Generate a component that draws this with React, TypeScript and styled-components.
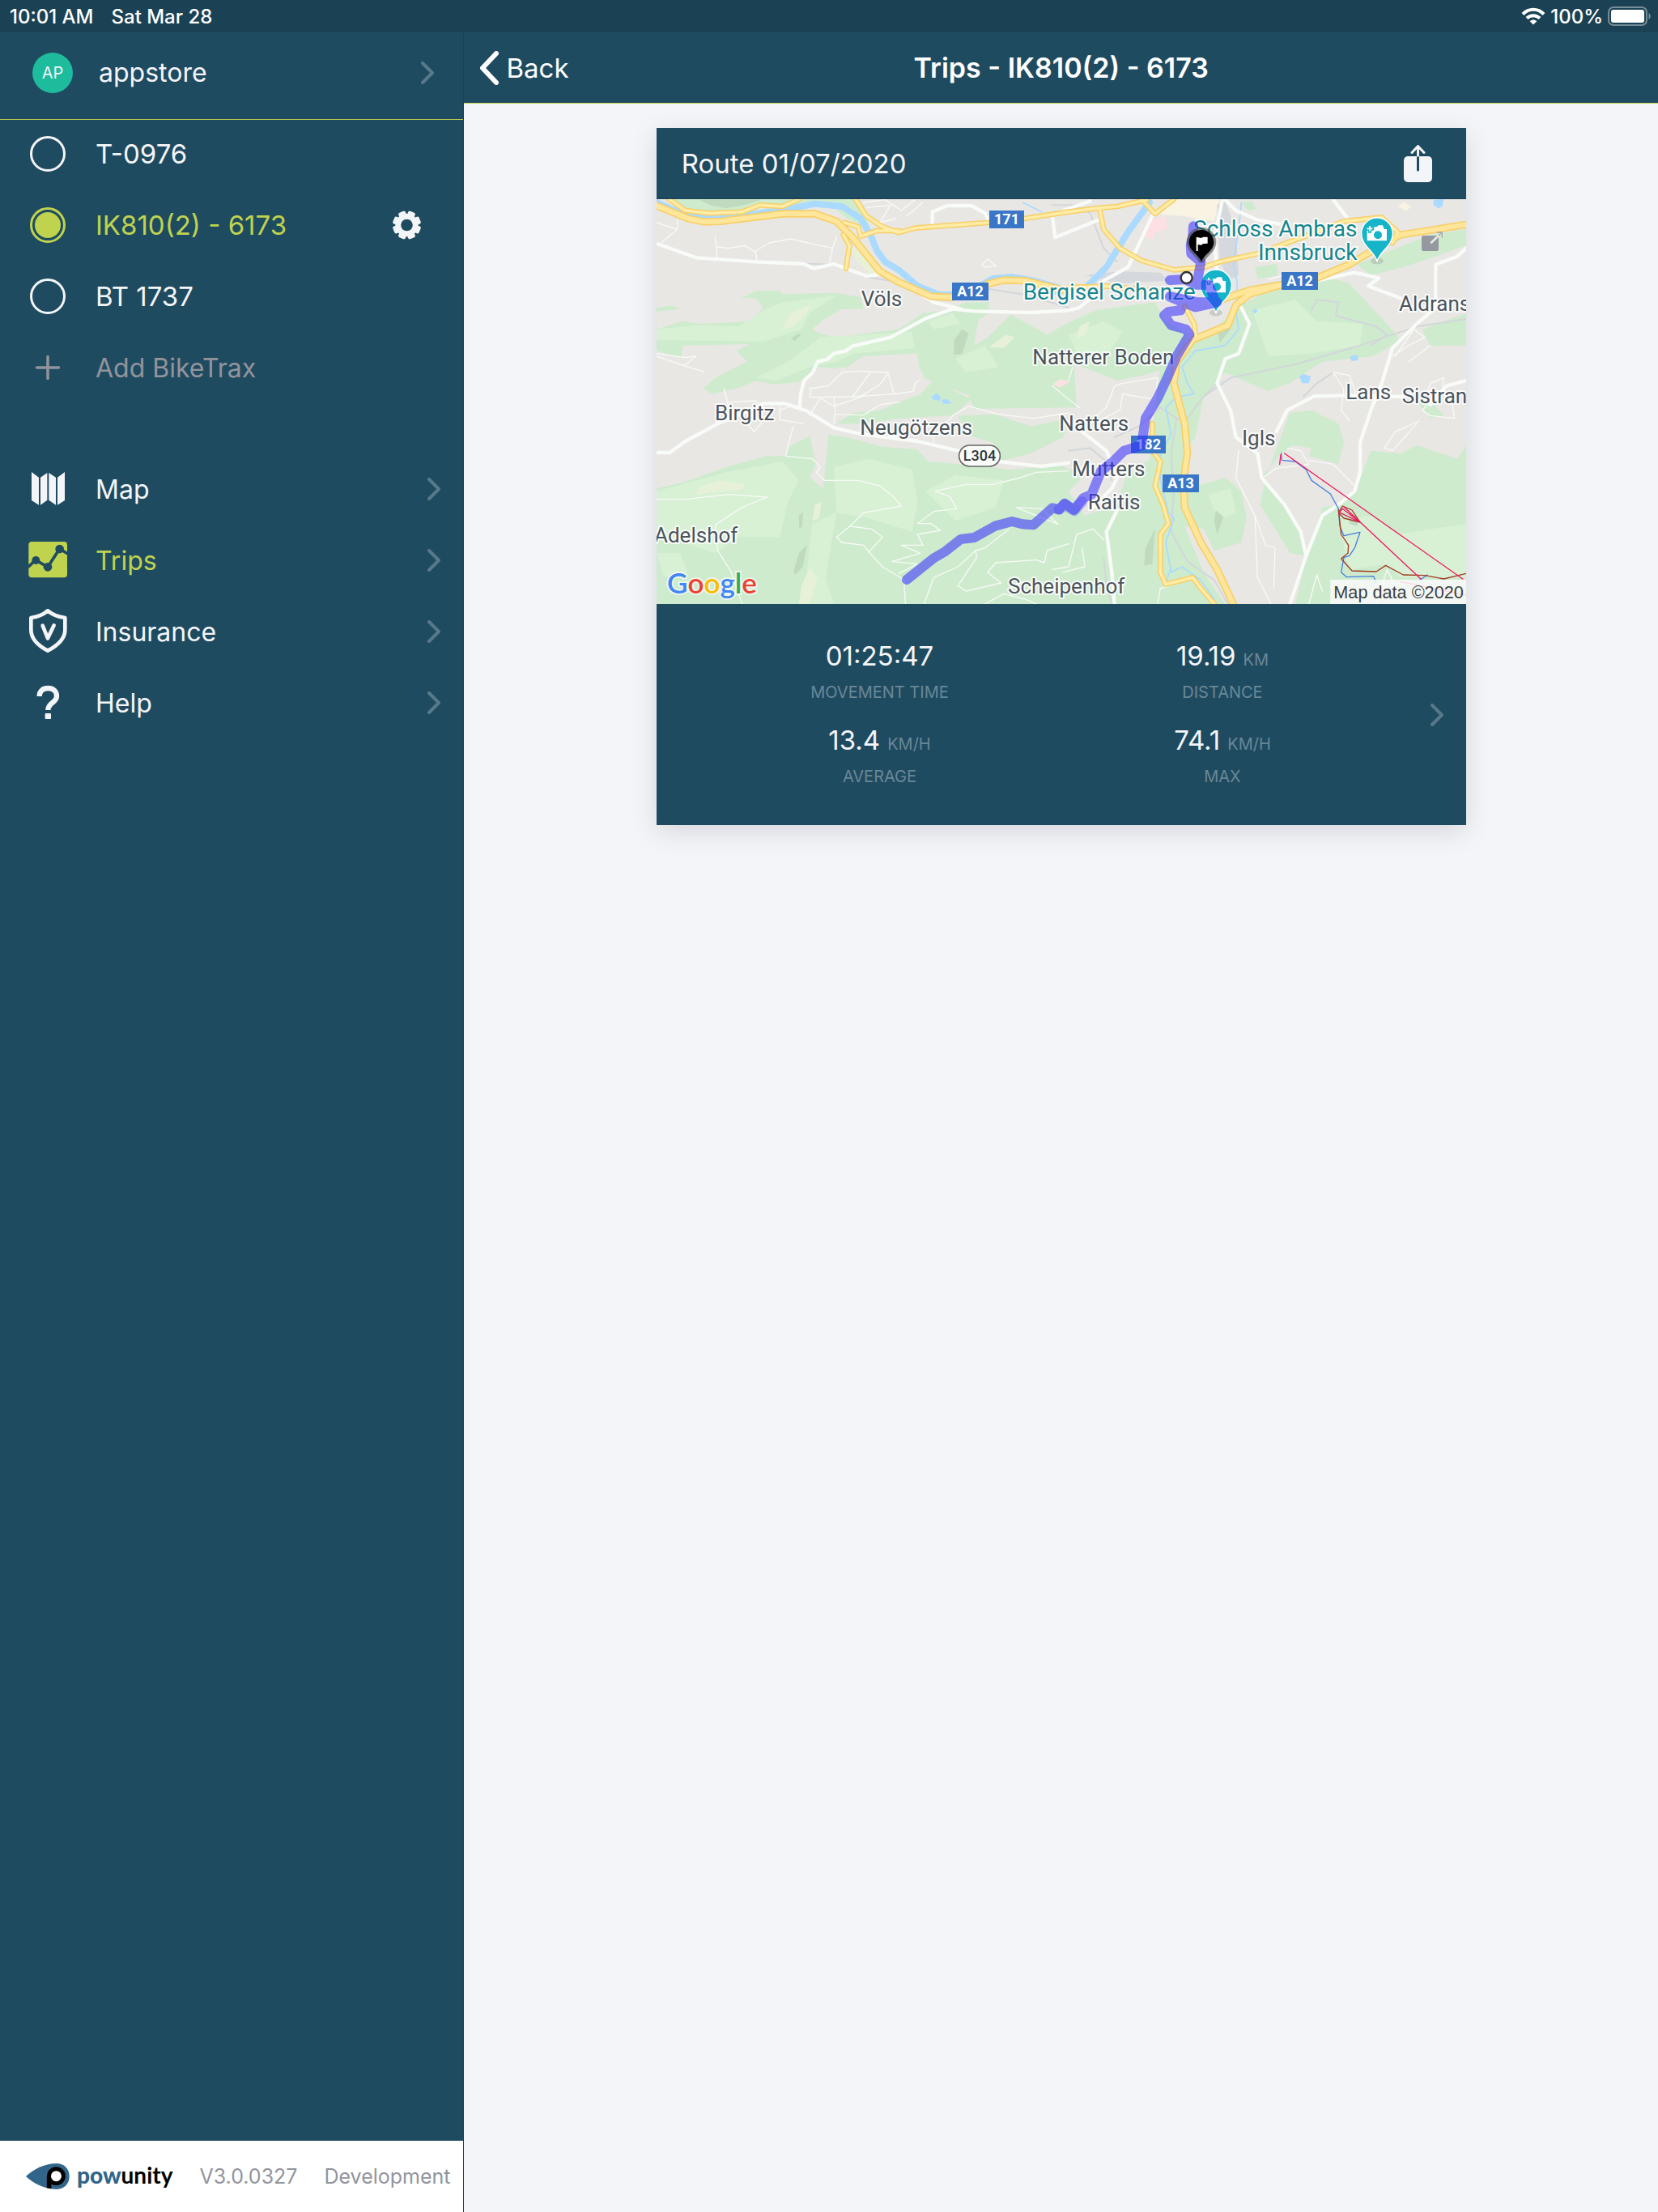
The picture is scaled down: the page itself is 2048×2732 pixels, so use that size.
import React, { useState } from "react";
import styled, { createGlobalStyle } from "styled-components";

const c = {
  brand: "#1f4b61",
  status: "#1b4254",
  edge: "#1a4155",
  lime: "#bfd34e",
  light: "#f4f5f8",
  muted: "#92949c",
  chevron: "#587989",
  faint: "#6a8796",
};

const Global = createGlobalStyle`
  * { box-sizing: border-box; }
  body { margin: 0; background: ${c.light}; font-family: Inter, Roboto, "Liberation Sans", sans-serif; }
  button { font: inherit; color: inherit; background: none; border: 0; padding: 0; cursor: pointer; }
  a { color: inherit; text-decoration: none; }
  svg { display: block; }
`;

const Page = styled.div`
  min-height: 100vh;
  display: flex;
  flex-direction: column;
`;

const StatusBar = styled.div`
  display: flex;
  align-items: center;
  height: 40px;
  padding: 0 8px 0 12px;
  background: ${c.status};
  color: #fff;
  font-size: 24px;
  font-weight: 500;
`;

const StatusDate = styled.span`
  margin-left: 22px;
  flex: 1;
`;

const StatusIcons = styled.div`
  display: flex;
  align-items: center;
  gap: 6px;
`;

const Split = styled.div`
  flex: 1;
  display: grid;
  grid-template-columns: 28% 1fr;
`;

const Sidebar = styled.aside`
  display: flex;
  flex-direction: column;
  background: ${c.brand};
  border-right: 1px solid ${c.edge};
  color: ${c.light};
  font-size: 32px;
`;

const Profile = styled.button`
  display: flex;
  align-items: center;
  gap: 32px;
  height: 108px;
  padding: 0 36px 8px 40px !important;
  border-bottom: 1px solid ${c.lime} !important;
  text-align: left;
`;

const Avatar = styled.span`
  display: grid;
  place-items: center;
  width: 50px;
  height: 50px;
  border-radius: 50%;
  background: #1dbc9c;
  font-size: 20px;
`;

const Grow = styled.span`
  flex: 1;
`;

const Bikes = styled.div`
  margin: -2px 0 62px;
`;

const rowCss = `
  display: flex;
  align-items: center;
  gap: 31px;
  height: 88px;
  padding: 0 28px 0 31px;
`;

const BikeRow = styled.div<{ $active?: boolean }>`
  ${rowCss}
  color: ${(p) => (p.$active ? c.lime : c.light)};
`;

const BikeLabel = styled.label`
  flex: 1;
  display: flex;
  align-items: center;
  gap: 31px;
  font-size: 33px;
`;

const Radio = styled.input`
  appearance: none;
  width: 44px;
  height: 44px;
  margin: 0 6px;
  padding: 3px;
  border: 3px solid ${c.light};
  border-radius: 50%;
  &:checked {
    border-color: ${c.lime};
    background: ${c.lime} content-box;
  }
`;

const GearButton = styled.button`
  margin-right: 24px;
  color: ${c.light};
`;

const AddRow = styled.button`
  ${rowCss}
  width: 100%;
  padding: 0 28px 0 31px !important;
  color: ${c.muted} !important;
  text-align: left;
`;

const MenuLink = styled.a<{ $active?: boolean }>`
  ${rowCss}
  && { color: ${(p) => (p.$active ? c.lime : c.light)}; }
`;

const Footer = styled.footer`
  display: flex;
  align-items: center;
  gap: 33px;
  height: 88px;
  margin-top: auto;
  padding-left: 32px;
  background: #fff;
  color: ${c.muted};
  font-size: 25px;
  white-space: nowrap;
`;

const Brand = styled.span`
  display: flex;
  align-items: center;
  gap: 8px;
  font-family: Lato, "Open Sans", sans-serif;
  font-size: 28px;
  line-height: 28px;
  font-weight: 700;
  color: #000;
  b { color: #32658a; }
`;

const BrandName = styled.span`
  padding-bottom: 4px;
`;

const Main = styled.main`
  min-width: 0;
`;

const TopBar = styled.header`
  display: grid;
  grid-template-columns: 1fr auto 1fr;
  align-items: center;
  height: 88px;
  padding: 0 18px;
  background: ${c.brand};
  border-bottom: 1px solid ${c.lime};
  color: #fff;
`;

const BackButton = styled.button`
  display: flex;
  align-items: center;
  gap: 8px;
  font-size: 33px !important;
`;

const Title = styled.h1`
  margin: 0;
  font-size: 34px;
  font-weight: 600;
`;

const Card = styled.article`
  max-width: 1000px;
  margin: 30px auto;
  background: ${c.brand};
  color: ${c.light};
  box-shadow: 0 8px 32px rgba(0, 0, 0, 0.12);
`;

const CardHead = styled.div`
  display: flex;
  align-items: center;
  justify-content: space-between;
  height: 88px;
  padding: 0 42px 0 31px;
  border-bottom: 1px solid ${c.edge};
`;

const CardTitle = styled.h2`
  margin: 0;
  font-size: 33px;
  font-weight: 400;
`;

const MapSvg = styled.svg`
  width: 100%;
  height: auto;
  background: #e9e7e4;
`;

const StatsLink = styled.a`
  display: flex;
  align-items: center;
  padding: 0 28px 0 64px;
`;

const Stats = styled.dl`
  flex: 1;
  display: grid;
  grid-template-columns: 1fr 1fr;
  margin: 0 45px 0 0;
  padding: 38px 0 27px;
`;

const Stat = styled.div`
  display: flex;
  flex-direction: column-reverse;
  align-items: center;
  justify-content: flex-end;
  height: 104px;
`;

const StatLabel = styled.dt`
  color: ${c.faint};
  font-size: 20px;
  line-height: 38px;
  text-transform: uppercase;
`;

const StatValue = styled.dd`
  display: flex;
  align-items: baseline;
  gap: 9px;
  height: 52px;
  margin: 0;
  font-size: 33px;
  line-height: 52px;
  small {
    color: ${c.faint};
    font-size: 20px;
    line-height: 20px;
  }
`;

const Chevron = () => (
  <svg width="16" height="28" viewBox="0 0 16 28" fill="none" stroke={c.chevron} strokeWidth="4" strokeLinecap="round" strokeLinejoin="round" aria-hidden="true">
    <path d="M2 2l12 12L2 26" />
  </svg>
);

const Icon = ({ box, children }: { box: string; children: React.ReactNode }) => (
  <svg width="56" height="56" viewBox={box} fill="currentColor" aria-hidden="true">
    {children}
  </svg>
);

const PlusIcon = () => (
  <Icon box="0 0 56 56">
    <path d="M28 14.500v27M14.500 28h27" stroke="currentColor" strokeWidth="3.500" strokeLinecap="round" />
  </Icon>
);

const MapIcon = () => (
  <Icon box="3 18 168 168">
    <path d="M27 39l27 20v102l-27-17zM60 59l25-17v101l-25 18zM91 42l26 17v102l-26-18zM123 59l27-20v105l-27 17z" />
  </Icon>
);

const TripsIcon = () => (
  <Icon box="3 282 168 168">
    <rect x="16" y="297" width="143" height="133" rx="12" />
    <path d="M14 391l28-26 45 26 44-68 30 19" fill="none" stroke={c.brand} strokeWidth="11" />
    <g fill={c.brand}>
      <circle cx="43" cy="366" r="15" />
      <circle cx="87" cy="391" r="16" />
      <circle cx="131" cy="324" r="16" />
    </g>
  </Icon>
);

const ShieldIcon = () => (
  <Icon box="3 546 168 168">
    <g fill="none" stroke="currentColor" strokeLinecap="round" strokeLinejoin="round">
      <path d="M87 553c-16 14-37 23-62 26v45c0 30 24 57 62 77 38-20 64-47 64-77v-45c-25-3-48-12-64-26z" strokeWidth="14" />
      <path d="M68 608l19 47 23-48" strokeWidth="14" />
    </g>
  </Icon>
);

const HelpIcon = () => (
  <Icon box="3 810 168 168">
    <path d="M56 870c0-20 13-30 32-30s32 11 32 29c0 25-32 24-32 52" fill="none" stroke="currentColor" strokeWidth="19" />
    <rect x="77" y="933" width="22" height="21" rx="2" />
  </Icon>
);

const GearIcon = () => (
  <svg width="35" height="36" viewBox="0 0 36 36" aria-hidden="true">
    <g fill="currentColor">
      {[22.5, 67.5, 112.5, 157.5].map((a) => (
        <rect key={a} x="13.200" y="0" width="9.600" height="36" rx="2.200" transform={`rotate(${a} 18 18)`} />
      ))}
      <circle cx="18" cy="18" r="14.500" />
    </g>
    <circle cx="18" cy="18" r="7.500" fill={c.brand} />
  </svg>
);

const ShareIcon = () => (
  <svg width="35" height="46" viewBox="0 0 35 46" fill="none" strokeLinecap="round" strokeLinejoin="round" aria-hidden="true">
    <rect x="0" y="14" width="35" height="32" rx="5" fill={c.light} />
    <path d="M17.500 15v16" stroke={c.brand} strokeWidth="3" />
    <path d="M17.500 13V2M10 9.500l7.500-8 7.500 8" stroke={c.light} strokeWidth="3" />
  </svg>
);

const WifiIcon = () => (
  <svg width="30" height="22" viewBox="0 0 30 22" fill="none" stroke="#fff" strokeWidth="4" aria-hidden="true">
    <path d="M2 8.500C9.500 .800 20.500 .800 28 8.500M7 13.500c4.500-4.500 11.500-4.500 16 0" />
    <path d="M15 21.500l-4.300-4.300c2.500-2.200 6.100-2.200 8.600 0z" fill="#fff" stroke="none" />
  </svg>
);

const BatteryIcon = () => (
  <svg width="54" height="24" viewBox="0 0 54 24" aria-hidden="true">
    <rect x="1" y="1" width="47" height="22" rx="6" fill="none" stroke="#768d98" strokeWidth="2" />
    <rect x="4" y="4" width="41" height="16" rx="3" fill="#fff" />
    <path d="M50.500 8c3 1.500 3 6.500 0 8z" fill="#768d98" />
  </svg>
);

const LogoMark = () => (
  <svg width="55" height="34" viewBox="36 49 166 100" aria-hidden="true">
    <path d="M36 99C64 72 108 51 150 51c28 0 48 20 48 48s-20 48-48 48C108 147 64 126 36 99z" fill="#32658a" />
    <path d="M114 98h17v47l-17-3z" fill="#000" />
    <circle cx="149" cy="98" r="27" fill="#fff" stroke="#000" strokeWidth="15" />
  </svg>
);

/* ---- map drawing: three units to a pixel ---- */

const woods = [
  "M100 18H780L830 130 740 90 690 50 600 40 520 70 420 50 330 70 230 65 130 50Z",
  "M33 420L90 412 122 425 33 435Z",
  "M345 385L400 358 490 358 500 370 690 365 790 380 800 425 720 425 650 465 610 500 640 515 690 530 830 512 930 500 1020 440 1110 430 1180 400 1265 400 1265 440 1225 465 1210 560 1260 530 1310 480 1345 445 1480 520 1560 475 1660 430 1880 400 1920 470 2010 520 1960 600 1900 650 1840 670 1740 690 1640 650 1580 630 1590 790 1210 795 1190 745 1100 710 1030 685 1005 640 1000 590 900 595 800 600 740 640 690 645 640 640 560 695 470 705 400 690 345 715 240 740 205 720 250 680 330 640 370 620 330 580 380 555 130 560 125 605 33 580V500L130 470 200 480 380 470 430 420 400 385Z",
  "M700 850L760 810 860 800 930 770 1010 740 1060 690 1200 760 1130 820 940 830 800 850Z",
  "M1150 820L1290 815 1420 860 1560 830 1540 900 1420 960 1300 990 1280 920 1180 890Z",
  "M33 1090L140 1065 290 1010 440 970 510 970 530 930 600 895 625 1000 600 1050 650 1090 660 1000 670 890 740 900 870 935 1000 945 1040 990 1160 1000 1340 1020 1530 1005 1620 1040 1560 1100 1620 1190 1740 1150 1770 1050 1860 980 1900 1080 1930 1210 1900 1518H33Z",
  "M1860 960L1900 640 1960 580 2040 540 2120 480 2200 410 2350 330 2500 300 2600 330 2740 480 2790 540 2690 600 2500 620 2380 700 2300 730 2140 660 2060 750 2030 900 1990 950 2000 1090 2140 1050 2200 1100 2220 1200 2200 1290 2100 1320 2060 1240 1990 1230 2060 1400 2140 1518H1900Z",
  "M2380 810L2460 800 2560 850 2580 920 2560 1000 2450 970 2460 940 2390 930 2350 960 2280 1040 2360 1150 2420 1250 2440 1340 2500 1160 2560 1150 2630 1080 2680 950 2790 960 2850 930 3000 980 3033 930V1518H2400L2440 1340 2380 1330 2270 1150 2290 1050Z",
  "M2630 260L2750 210 2900 150 3033 130V190L2920 230 2800 270 2680 300Z",
  "M2870 500L3033 440V560L2900 560Z",
  "M2250 270L2330 258 2335 300 2260 315Z",
  "M2200 30L2240 25 2255 55 2225 60Z",
  "M2830 740L2890 750 2950 820 2900 830Z",
];

const meadows = [
  "M33 500L180 485 340 490 430 430 500 400 700 375 600 440 570 500 430 545 33 540Z",
  "M640 530L980 510 990 570 760 590 700 620 600 640 480 690 400 680 520 620Z",
  "M1040 470L1130 440 1160 480 1060 500Z",
  "M1140 610L1250 560 1300 640 1180 660Z",
  "M33 1100L290 1030 500 990 560 1060 520 1140 490 1270 340 1270 250 1330 130 1290 33 1280Z",
  "M690 1010L820 980 980 1020 1000 1140 980 1250 820 1200 700 1180Z",
  "M610 1220L700 1180 680 1290 660 1420 690 1518H560L590 1400Z",
  "M1030 1100L1140 1040 1320 1060 1290 1160 1140 1210Z",
  "M1560 520L1690 470 1760 510 1700 600 1600 610Z",
  "M2240 430L2400 390 2480 470 2650 480 2640 560 2460 590 2300 600Z",
  "M2560 1210L2680 1190 2780 1260 3033 1220V1420H2790L2740 1370 2600 1390Z",
  "M2080 1110L2160 1090 2180 1180 2110 1210Z",
  "M33 1330L120 1330 150 1400 60 1420Z",
];

const pale = [
  "M500 500L530 440 600 410 590 440 540 490Z",
  "M1265 565L1330 520 1360 530 1320 570Z",
  "M175 1113L200 1080 270 1060 360 1075 350 1095 230 1105Z",
  "M620 1150L645 1140 635 1200 610 1210Z",
  "M570 1450L600 1385 630 1420 600 1518H560Z",
  "M755 200L790 200 860 290 820 295 770 240Z",
  "M1600 490L1640 470 1620 520 1590 535Z",
];

const sand = ["M1900 75L1930 18H2120L2100 100 1980 80Z", "M2780 45L2800 28 2830 45 2810 62Z"];

const shades = [
  "M190 20H420L360 40 290 52 230 40Z",
  "M1135 540L1165 500 1190 515 1165 590 1135 595Z",
  "M530 535L560 515 568 522 545 543Z",
  "M560 1330L590 1300 575 1380 550 1408 540 1400Z",
  "M560 1190L576 1178 572 1230 562 1240Z",
  "M1845 1310L1880 1240 1870 1370 1840 1375Z",
  "M2600 1180L2634 1200 2630 1230 2600 1220Z",
  "M2110 500L2150 470 2160 500 2120 550Z",
  "M2105 1170L2134 1195 2110 1260 2100 1210Z",
];

const rails = [
  "M560 255L700 262 800 305 930 325 1040 365M1260 350L1400 372 1560 420M1500 40H1580L1640 70 1690 200 1740 250",
  "M2060 750L2160 680 2400 630 2640 560 2850 490 3033 462",
  "M1730 900L1820 860 1900 790 1960 830 2000 830 2060 750 2120 690",
  "M1960 830L1940 960 1950 1100 1940 1250 2000 1360 2100 1430 2150 1518",
  "M1560 950L1640 940 1700 990 1720 1060M1690 1350L1700 1450 1720 1518",
  "M2460 430L2480 390 2560 400 2550 450 2700 490 2740 520 2680 560",
  "M2430 750L2480 700 2540 660",
];

const whiteRoads = [
  "M33 182L180 235 400 250 580 258 615 275 690 258 810 303 870 295",
  "M33 957H82L140 915 260 850 380 800 430 775 510 775 590 803 690 865 790 888 1000 915 1150 950 1300 990 1460 1008 1560 995",
  "M563 790L567 740 580 690 612 660 630 620 665 612 690 590 735 580 760 562 900 530 1030 460 1130 425 1210 433 1420 438 1560 430 1600 420 1660 370",
  "M1055 110V65L1110 42 1200 42 1250 70 1260 90M1500 80L1510 160 1670 95M1540 60L1640 25",
  "M1020 375L1060 400 1160 425M1690 320L1780 270 1870 80 1950 20",
  "M2140 20L2180 60 2260 95 2340 110M2540 18L2590 85M2110 300L2100 160 2130 20",
  "M2200 420L2230 480 2190 590 2140 610 2110 700 2160 800 2180 900 2260 960 2275 1050 2360 1150 2420 1250 2440 1340 2380 1518",
  "M2440 1340L2500 1190 2560 1150 2620 1100 2640 1030 2640 920 2680 800 2720 700 2760 570 2850 480 2920 420 2920 260 3000 230 3033 200",
  "M2330 880L2370 800 2470 748 2590 745 2800 750M2900 780L2960 710 3033 690",
  "M1610 880L1700 950 1740 1050 1720 1090 1650 1160M1740 1170L1700 1250 1720 1400 1730 1518",
  "M2480 320L2620 290 2710 310 2670 340 2790 385",
];

const paths = [
  "M250 155L258 240M258 195L300 200 360 190 400 215 405 245M400 210L450 180 530 165 685 200 700 155M685 200L675 250",
  "M33 590L140 605 180 600 135 635 33 600M135 635L210 658M110 95L110 130 50 180M33 105L110 130",
  "M600 720L670 710 720 660 780 655 890 660 913 740 760 750 600 752 605 725M760 750L825 660M895 658L860 705 780 755 690 785 640 755 600 820M913 740L985 730 990 700 1010 688M690 755L695 800 690 850M700 815L800 818 860 780 930 770",
  "M490 790V835L580 850M490 800L540 780M540 860L520 930 512 970 610 980 640 1010 625 1030 655 1060 780 1060 860 1080 910 1120 940 1155 800 1180 750 1230 700 1270 720 1290 800 1300 820 1325 870 1380 950 1428 955 1518",
  "M33 1130H140L300 1112 443 1122 350 1160 250 1225 260 1320 310 1400 350 1518M750 1230L830 1240 870 1270 820 1325",
  "M1560 1025L1440 1030 1380 1050 1280 1075 1180 1075 1065 1100 1120 1120 1145 1165 1060 1175 1000 1220 1050 1220 1085 1245 1000 1260 1020 1300 940 1300 1010 1330 905 1360 1000 1370 930 1405",
  "M1365 1160L1520 1222 1460 1165 1365 1160M1340 1240L1250 1310 1215 1320 1150 1380 1060 1420 1025 1518M1215 1320L1220 1345 1150 1450 1180 1470 1310 1440 1260 1400 1290 1365 1440 1355 1470 1365 1480 1320 1560 1295M1250 1518L1320 1480 1400 1500 1440 1518",
  "M800 30L880 20 940 60 990 20M810 50L900 40 860 105 920 90M960 80L1020 30M1240 260L1260 240 1290 265 1250 270Z",
  "M1060 920L1060 900 1130 820 1190 785 1300 815 1430 830 1560 810M300 770L400 765 430 790 420 850 395 880 360 840M283 720L300 790",
  "M1640 840L1700 790 1730 710 1760 700 1890 680 1880 760 1760 740 1750 800 1690 830M1500 710L1560 760 1600 790M1560 690L1575 640",
  "M2190 950L2180 1050 2250 1190 2260 1420 2310 1518M2250 1190L2290 1300 2325 1310 2320 1460M2280 1050L2330 1015 2450 1000 2420 950 2370 940M2450 985L2540 1000 2620 1080",
  "M2760 600L2820 560 2880 530 2840 500 2770 600M2820 620L2900 560M2870 800L2910 760 2980 760 2990 830 2900 820Z M2850 850L2760 950 2730 940 2770 880 2860 840M2880 760L2900 700 2950 680 2940 760",
  "M1500 1390L1560 1380 1590 1260 1650 1240 1690 1280M1540 1400L1620 1380 1610 1310M1890 1518L1900 1460 1940 1450M2450 1518L2480 1410 2500 1470M2700 1518L2740 1390 2770 1450",
  "M2540 660L2600 670 2625 740M2540 660L2580 720 2570 800 2600 840M2300 315L2400 290",
];

const water = [
  "M33 30L100 60 230 80 400 72 520 55 620 35 720 45 790 90 830 160 850 210 880 250 930 280 1000 340 1080 372 1130 372",
  "M1230 340L1280 312 1350 306 1430 320 1520 345M1500 360L1620 350 1700 270 1780 140 1860 30",
];

const streams = [
  "M2200 30L2190 130 2170 260 2185 330 2180 430 2190 500 2140 560 2030 580 1980 640 2000 700 2025 740 1960 750 1920 790 1940 890 1900 960 1900 1060 1930 1180 1950 1200 1920 1290 1940 1400 1980 1380 2050 1430 2100 1500",
  "M1940 1380L1920 1440M1390 30L1460 65",
];

const yellowRoads = [
  "M80 18L140 60 230 70 350 65 415 40 500 45 560 18M770 18L810 80 870 120 930 142 990 125 1160 112 1260 105M1395 90L1560 65 1680 50 1740 45 1850 20M1830 18L1880 72 1950 18M790 155L850 135 930 135",
  "M735 275L748 190 725 150M730 105L780 120 790 155",
  "M1675 55L1690 130 1750 200 1830 245 1950 280 2060 270 2120 250 2260 220 2450 150 2580 100 2720 85 2780 140 2760 180",
  "M1560 345L1700 340 1900 360",
];

const motorways = [
  "M33 42L150 90 210 102 270 100 500 72 620 72 700 100 760 160 860 285 930 325 1050 378 1130 382M1260 332L1320 318 1400 320 1560 360",
  "M2030 535L2150 485 2180 410 2230 370 2350 335M2020 540L1960 620 1950 700 1990 850 2000 960 1985 1060 1990 1160 2050 1290 2110 1390 2170 1518",
  "M2100 400L2230 355 2350 335M2480 310L2600 260 2700 200 2790 150 2920 130 3033 112",
];

const southRoads = [
  "M1990 415L2025 480 2032 530",
  "M1870 850L1870 950 1900 990 1890 1040 1880 1080 1910 1150 1930 1220 1900 1260 1900 1400 1920 1445 2020 1420 2050 1460 2100 1518",
];

type Label = [string, number, number];
const towns: Label[] = [
  ["Völs", 791, 414],
  ["Birgitz", 249, 838],
  ["Neugötzens", 787, 891],
  ["Adelshof", 24, 1291],
  ["Natterer Boden", 1426, 630],
  ["Natters", 1525, 875],
  ["Mutters", 1573, 1045],
  ["Raitis", 1631, 1168],
  ["Scheipenhof", 1335, 1480],
  ["Igls", 2202, 931],
  ["Lans", 2587, 759],
  ["Sistrans", 2795, 774],
  ["Aldrans", 2784, 431],
];
const sights: Label[] = [
  ["Bergisel Schanze", 1391, 391],
  ["Schloss Ambras", 2022, 157],
  ["Innsbruck", 2262, 242],
];
const shields: [string, number, number, number][] = [
  ["171", 1266, 60, 129],
  ["A12", 1128, 327, 135],
  ["A12", 2349, 288, 135],
  ["182", 1791, 894, 129],
  ["A13", 1908, 1038, 135],
];

const Lines = ({ d, color, w }: { d: string[]; color: string; w: number }) => (
  <g fill="none" stroke={color} strokeWidth={w} strokeLinejoin="round" strokeLinecap="round">
    {d.map((p) => (
      <path key={p} d={p} />
    ))}
  </g>
);

const Areas = ({ d, color }: { d: string[]; color: string }) => (
  <g fill={color}>
    {d.map((p) => (
      <path key={p} d={p} />
    ))}
  </g>
);

const CameraPin = ({ x, y }: { x: number; y: number }) => (
  <g transform={`translate(${x} ${y})`}>
    <ellipse cx="0" cy="102" rx="24" ry="12" fill="#8f9a94" opacity=".35" />
    <path d="M0 104C-8 66-58 48-58 0a58 58 0 0 1 116 0C58 48 8 66 0 104z" fill="#16b4c8" stroke="#fff" strokeWidth="4" />
    <path d="M-37-14h22v-10h14l6-6h16l5 14h10v43h-73z" fill="#fff" />
    <circle cx="3" cy="6" r="15" fill="#16b4c8" />
    <path d="M-27-34v32M-43-18h32" stroke="#16b4c8" strokeWidth="13" />
    <path d="M-27-28v20M-37-18h20" stroke="#fff" strokeWidth="5" />
  </g>
);

const RouteMap = () => (
  <MapSvg viewBox="33 18 3000 1500" role="img" aria-label="Route map south of Innsbruck" fontFamily="Roboto, sans-serif">
    <Areas d={woods} color="#ceebce" />
    <Areas d={meadows} color="#d8f1d5" />
    <Areas d={pale} color="#e7f1d8" />
    <Areas d={sand} color="#f8f3e2" />
    <Areas d={shades} color="#c0dac0" />
    <path d="M1850 100L1920 80 1925 130 1880 140 1870 170 1845 160ZM1500 705L1530 685 1565 695 1530 715Z" fill="#fce0e2" />
    <path d="M2110 40L2140 25 2180 130 2190 300 2150 320 2120 240ZM1620 300L1750 285 1900 290 1930 320 1750 330Z" fill="#d5d8dc" />
    <Lines d={rails} color="#d3d6da" w={6} />
    <Lines d={water} color="#aadaff" w={24} />
    <Lines d={streams} color="#aadaff" w={5} />
    <Areas
      d={[
        "M1052 750L1070 737 1086 750 1082 764 1060 762Z",
        "M1088 762L1110 758 1128 775 1098 777Z",
        "M2415 675L2430 665 2457 675 2450 700 2425 700Z",
        "M2602 600L2630 595 2633 615 2608 618Z",
        "M2240 432L2255 424 2260 435 2248 442Z",
        "M2912 20L2950 18 2945 45 2930 52 2912 40Z",
      ]}
      color="#aadaff"
    />
    <Lines d={paths} color="#f8faf5" w={4} />
    <Lines d={whiteRoads} color="#f9fbf8" w={13} />
    <Lines d={[...yellowRoads, ...southRoads]} color="#f7cf68" w={20} />
    <Lines d={motorways} color="#f7cf68" w={28} />
    <Lines d={[...yellowRoads, ...southRoads]} color="#ffeca6" w={11} />
    <Lines d={motorways} color="#ffe69a" w={18} />

    <Lines
      d={[
        "M2348 960L2350 985 2400 990 2440 1020 2460 1060 2530 1110 2560 1165 2565 1230 2580 1265 2640 1252 2620 1310 2600 1340 2580 1345 2570 1400 2590 1418 2690 1415 2700 1440",
        "M2860 1430L2890 1410",
      ]}
      color="#4a7fe0"
      w={4}
    />
    <Lines
      d={["M2560 1170L2570 1260 2597 1300 2595 1330 2570 1350 2610 1395 2700 1398 2735 1375 2800 1410 2880 1412 2950 1425 3033 1405M2560 1180L2580 1200 2640 1215 2610 1170 2575 1155Z"]}
      color="#a23b22"
      w={4}
    />
    <Lines
      d={["M2342 1000L2346 965M2360 960L3020 1425M2580 1158L2865 1425M2562 1178L2640 1215 2575 1165Z", "M2790 1435L3033 1485"]}
      color="#f2175d"
      w={4}
    />

    <g>
      {shields.map(([t, x, y, w]) => (
        <g key={t + x}>
          <rect x={x} y={y} width={w} height="66" fill="#3a76c7" />
          <text x={x + w / 2} y={y + 52} textAnchor="middle" fontSize="54" fontWeight="700" fill="#fff">
            {t}
          </text>
        </g>
      ))}
      <rect x="1154" y="930" width="152" height="78" rx="39" fill="#f9fbf8" stroke="#666" strokeWidth="5" />
      <text x="1230" y="988" textAnchor="middle" fontSize="54" fontWeight="500" fill="#33373a">
        L304
      </text>
    </g>

    <g stroke="#fff" strokeOpacity=".85" strokeWidth="12" strokeLinejoin="round" paintOrder="stroke">
      <g fill="#4c545c" fontSize="78">
        {towns.map(([t, x, y]) => (
          <text key={t} x={x} y={y}>
            {t}
          </text>
        ))}
      </g>
      <g fill="#158690" fontSize="84">
        {sights.map(([t, x, y]) => (
          <text key={t} x={x} y={y}>
            {t}
          </text>
        ))}
      </g>
    </g>

    <CameraPin x={2703} y={145} />
    <CameraPin x={2106} y={337} />

    <g fill="none" stroke="#322aff" strokeOpacity=".55" strokeLinecap="round" strokeLinejoin="round">
      <path
        d="M960 1428L1060 1348 1100 1325 1160 1278 1210 1272 1290 1228 1350 1212 1390 1222 1430 1225 1500 1162 1525 1168 1545 1145 1580 1170 1615 1125 1645 1112 1680 1025 1725 990 1765 950 1830 930 1845 830 1890 755 1930 670 1960 600 2008 520 1995 500 1940 485 1914 448 1930 435 1975 430 1985 400 2030 418 2105 402 2080 335 2035 335 1990 315 1935 318M1935 380L1985 400M1935 378L2040 400 2110 400M2035 335L2050 250 2014 220 2012 190 2020 160 2022 118"
        strokeWidth="36"
      />
      <path d="M1525 1168L1545 1150 1580 1172 1610 1140" strokeWidth="40" strokeOpacity=".25" />
    </g>
    <circle cx="1997" cy="309" r="21" fill="#fff" stroke="#333" strokeWidth="7" />
    <g transform="translate(2052 180)">
      <path d="M0 72C-5 46-46 30-46-2a46 46 0 0 1 92 0C46 30 5 46 0 72z" fill="#000" stroke="#444" strokeOpacity=".6" strokeWidth="18" paintOrder="stroke" />
      <path d="M-19 30v-52l18 4 8-4h16v24l-16 1-8 5-12-2v24z" fill="#fff" />
    </g>

    <g opacity=".95">
      <rect x="2868" y="153" width="63" height="57" rx="7" fill="#92949c" />
      <path d="M2902 181L2931 153" stroke="#e9ece6" strokeWidth="8" />
      <path d="M2931 153L2942 142M2924 141h20v20" fill="none" stroke="#a5a7ae" strokeWidth="4" />
    </g>

    <text x="72" y="1479" fontFamily="Lato, sans-serif" fontSize="105" fontWeight="600" stroke="#fff" strokeOpacity=".6" strokeWidth="12" paintOrder="stroke">
      <tspan fill="#4285f4">G</tspan>
      <tspan fill="#ea4335">o</tspan>
      <tspan fill="#fbbc05">o</tspan>
      <tspan fill="#4285f4">g</tspan>
      <tspan fill="#34a853">l</tspan>
      <tspan fill="#ea4335">e</tspan>
    </text>
    <rect x="2530" y="1428" width="503" height="90" fill="#fafafa" fillOpacity=".85" />
    <text x="2542" y="1496" fontFamily="'Liberation Sans', sans-serif" fontSize="65" fill="#3c4043">
      Map data ©2020
    </text>
  </MapSvg>
);

const bikes = ["T-0976", "IK810(2) - 6173", "BT 1737"];
const menu = [
  { label: "Map", icon: <MapIcon /> },
  { label: "Trips", icon: <TripsIcon />, active: true },
  { label: "Insurance", icon: <ShieldIcon /> },
  { label: "Help", icon: <HelpIcon /> },
];
const stats = [
  { label: "Movement time", value: "01:25:47" },
  { label: "Distance", value: "19.19", unit: "KM" },
  { label: "Average", value: "13.4", unit: "KM/H" },
  { label: "Max", value: "74.1", unit: "KM/H" },
];

export default function App() {
  const [bike, setBike] = useState(bikes[1]);
  return (
    <Page>
      <Global />
      <StatusBar>
        <span>10:01 AM</span>
        <StatusDate>Sat Mar 28</StatusDate>
        <StatusIcons>
          <WifiIcon />
          <span>100%</span>
          <BatteryIcon />
        </StatusIcons>
      </StatusBar>
      <Split>
        <Sidebar>
          <Profile type="button">
            <Avatar>AP</Avatar>
            <Grow>appstore</Grow>
            <Chevron />
          </Profile>
          <Bikes>
            {bikes.map((name) => (
              <BikeRow key={name} $active={name === bike}>
                <BikeLabel>
                  <Radio type="radio" name="bike" checked={name === bike} onChange={() => setBike(name)} />
                  {name}
                </BikeLabel>
                {name === bike && (
                  <GearButton type="button" aria-label="Settings">
                    <GearIcon />
                  </GearButton>
                )}
              </BikeRow>
            ))}
            <AddRow type="button">
              <PlusIcon />
              Add BikeTrax
            </AddRow>
          </Bikes>
          <nav>
            {menu.map((m) => (
              <MenuLink key={m.label} href="#" $active={m.active}>
                {m.icon}
                <Grow>{m.label}</Grow>
                <Chevron />
              </MenuLink>
            ))}
          </nav>
          <Footer>
            <Brand>
              <LogoMark />
              <BrandName>
                <b>pow</b>unity
              </BrandName>
            </Brand>
            <span>V3.0.0327</span>
            <span>Development</span>
          </Footer>
        </Sidebar>
        <Main>
          <TopBar>
            <BackButton type="button">
              <svg width="26" height="42" viewBox="0 0 26 42" fill="none" stroke="#fff" strokeWidth="6" strokeLinecap="round" strokeLinejoin="round" aria-hidden="true">
                <path d="M22 3L5 21l17 18" />
              </svg>
              Back
            </BackButton>
            <Title>Trips - IK810(2) - 6173</Title>
          </TopBar>
          <Card>
            <CardHead>
              <CardTitle>Route 01/07/2020</CardTitle>
              <button type="button" aria-label="Share">
                <ShareIcon />
              </button>
            </CardHead>
            <RouteMap />
            <StatsLink href="#">
              <Stats>
                {stats.map((s) => (
                  <Stat key={s.label}>
                    <StatLabel>{s.label}</StatLabel>
                    <StatValue>
                      {s.value}
                      {s.unit && <small>{s.unit}</small>}
                    </StatValue>
                  </Stat>
                ))}
              </Stats>
              <Chevron />
            </StatsLink>
          </Card>
        </Main>
      </Split>
    </Page>
  );
}
